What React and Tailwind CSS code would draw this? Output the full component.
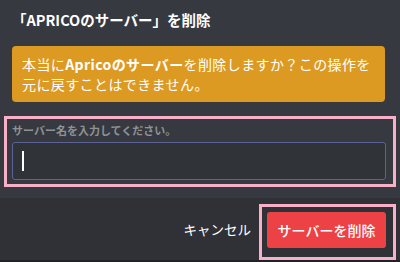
export default function App() {
  const font = { fontFamily: '"Noto Sans CJK JP", "Noto Sans", sans-serif' };
  return (
    <div className="w-[400px] h-[262px] bg-[#36393f] flex flex-col overflow-hidden" style={font}>
      {/* Header */}
      <div className="pt-[10px] pl-[12px] pr-[14px]">
        <h2 className="text-[14.5px] leading-[20px] font-bold text-white">「APRICOのサーバー」を削除</h2>
      </div>

      {/* Warning */}
      <div className="mt-[16px] ml-[12px] mr-[15px] rounded-[4px] bg-[#dc9a22] px-[10px] py-[8px]">
        <p className="text-[14px] leading-[20px] tracking-[0.4px] text-white whitespace-nowrap">
          本当に<span className="font-bold">Apricoのサーバー</span>を削除しますか？この操作を
          <br />
          元に戻すことはできません。
        </p>
      </div>

      {/* Name input (highlighted) */}
      <div className="mt-[14px] mx-[4px] border-[3px] border-[#f7b0c8] pl-[5px] pr-[7px] pt-[3px] pb-[4px]">
        <label className="block text-[11px] leading-[16px] text-[#8e9297] font-semibold">
          サーバー名を入力してください。
        </label>
        <div className="mt-[4px] h-[38px] rounded-[3px] border border-[#5c6196] bg-[#303338] flex items-center pl-[9px]">
          <div className="w-[2px] h-[20px] bg-white" />
        </div>
      </div>

      {/* Footer */}
      <div className="mt-[11px] flex-1 bg-[#2f3136] flex justify-end items-start pt-[6px] pr-[4px] border-b-2 border-[#202225]">
        <div className="mt-[7px] h-[36px] flex items-center mr-[5px] px-[3px] text-[13.5px] text-white">キャンセル</div>
        <div className="border-[3px] border-[#f7b0c8] pl-[5px] pr-[7px] pt-[5px] pb-[9px]">
          <button className="h-[36px] w-[119px] rounded-[3px] bg-[#ed4245] text-white text-[14px] font-medium">
            サーバーを削除
          </button>
        </div>
      </div>
    </div>
  );
}
